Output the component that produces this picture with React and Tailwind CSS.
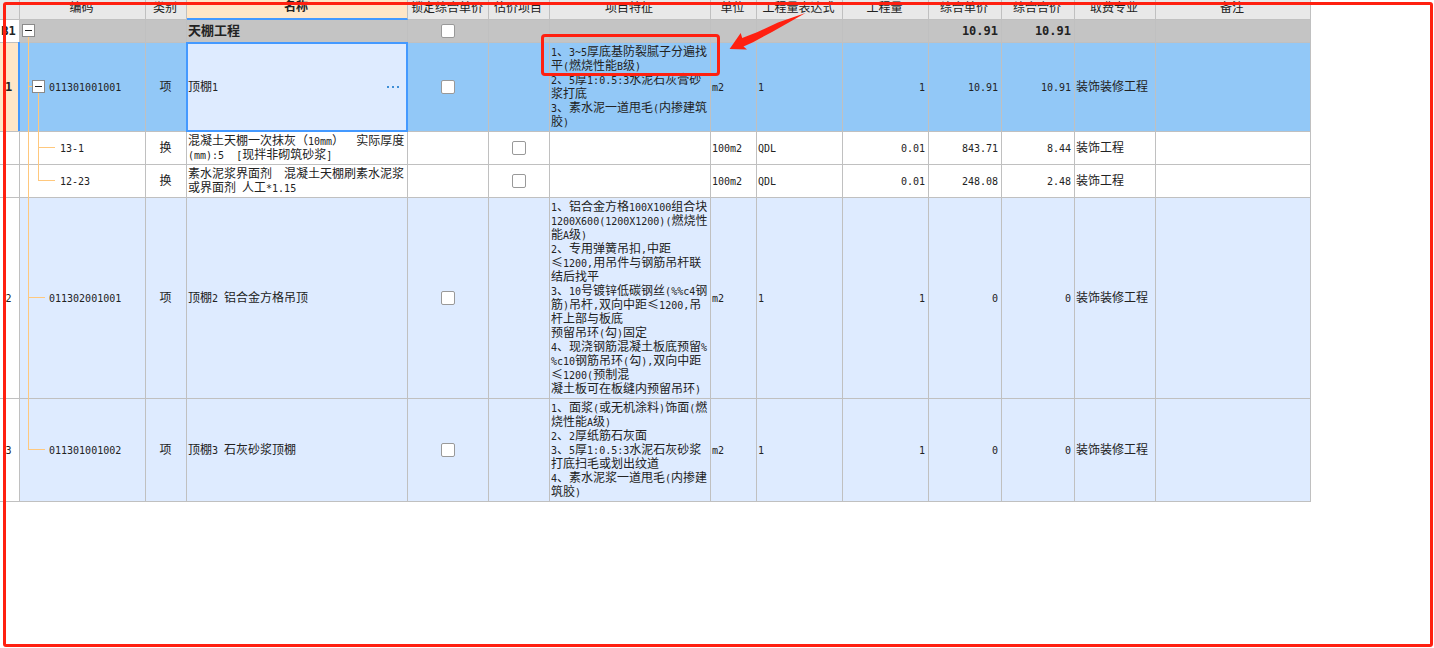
import React from "react";

const GRID = "border-[#c0c0c0]";

const columns = [
  { title: "", width: "w-5" },
  { title: "编码", width: "w-[126px]" },
  { title: "类别", width: "w-[41px]" },
  { title: "名称", width: "w-[221px]", active: true },
  { title: "锁定综合单价", width: "w-[81px]" },
  { title: "估价项目", width: "w-[61px]" },
  { title: "项目特征", width: "w-[161px]" },
  { title: "单位", width: "w-[46px]" },
  { title: "工程量表达式", width: "w-[86px]" },
  { title: "工程量", width: "w-[86px]" },
  { title: "综合单价", width: "w-[73px]" },
  { title: "综合合价", width: "w-[73px]" },
  { title: "取费专业", width: "w-[81px]" },
  { title: "备注", width: "w-[155px]" },
];

const rows = [
  {
    kind: "group",
    no: "B1",
    name: ["天棚工程"],
    lock: true,
    price: "10.91",
    total: "10.91",
  },
  {
    kind: "selected",
    no: "1",
    code: "011301001001",
    type: "项",
    name: ["顶棚1"],
    lock: true,
    feature: [
      "1、3~5厚底基防裂腻子分遍找",
      "平(燃烧性能B级)",
      "2、5厚1:0.5:3水泥石灰膏砂",
      "浆打底",
      "3、素水泥一道甩毛(内掺建筑",
      "胶)",
    ],
    unit: "m2",
    expr: "1",
    qty: "1",
    price: "10.91",
    total: "10.91",
    major: "装饰装修工程",
  },
  {
    kind: "child",
    code: "13-1",
    type: "换",
    name: ["混凝土天棚一次抹灰（10mm）  实际厚度", "(mm):5  [现拌非砌筑砂浆]"],
    estimate: true,
    unit: "100m2",
    expr: "QDL",
    qty: "0.01",
    price: "843.71",
    total: "8.44",
    major: "装饰工程",
  },
  {
    kind: "child",
    last: true,
    code: "12-23",
    type: "换",
    name: ["素水泥浆界面剂  混凝土天棚刷素水泥浆", "或界面剂 人工*1.15"],
    estimate: true,
    unit: "100m2",
    expr: "QDL",
    qty: "0.01",
    price: "248.08",
    total: "2.48",
    major: "装饰工程",
  },
  {
    kind: "item",
    no: "2",
    code: "011302001001",
    type: "项",
    name: ["顶棚2 铝合金方格吊顶"],
    lock: true,
    feature: [
      "1、铝合金方格100X100组合块",
      "1200X600(1200X1200)(燃烧性",
      "能A级)",
      "2、专用弹簧吊扣,中距",
      "≤1200,用吊件与钢筋吊杆联",
      "结后找平",
      "3、10号镀锌低碳钢丝(%%c4钢",
      "筋)吊杆,双向中距≤1200,吊",
      "杆上部与板底",
      "预留吊环(勾)固定",
      "4、现浇钢筋混凝土板底预留%",
      "%c10钢筋吊环(勾),双向中距",
      "≤1200(预制混",
      "凝土板可在板缝内预留吊环)",
    ],
    unit: "m2",
    expr: "1",
    qty: "1",
    price: "0",
    total: "0",
    major: "装饰装修工程",
  },
  {
    kind: "item",
    last: true,
    no: "3",
    code: "011301001002",
    type: "项",
    name: ["顶棚3 石灰砂浆顶棚"],
    lock: true,
    feature: [
      "1、面浆(或无机涂料)饰面(燃",
      "烧性能A级)",
      "2、2厚纸筋石灰面",
      "3、5厚1:0.5:3水泥石灰砂浆",
      "打底扫毛或划出纹道",
      "4、素水泥浆一道甩毛(内掺建",
      "筑胶)",
    ],
    unit: "m2",
    expr: "1",
    qty: "1",
    price: "0",
    total: "0",
    major: "装饰装修工程",
  },
];

const rowBackground = {
  group: "bg-[#c4c4c4]",
  selected: "bg-[#92c8f7]",
  child: "bg-white",
  item: "bg-[#deebff]",
};

// Latin runs are set in a half-width monospace beside full-width Chinese.
function Mixed({ text, bold }) {
  const runs = text.match(/[\x20-\x7e]+|[^\x20-\x7e]+/g) || [];
  return runs.map((run, i) =>
    /^[\x20-\x7e]/.test(run) ? (
      <span
        key={i}
        className={
          bold
            ? "font-['DejaVu_Sans_Mono',monospace] text-[12px] leading-none"
            : "font-['DejaVu_Sans_Mono',monospace] text-[10px] leading-none"
        }
      >
        {run}
      </span>
    ) : (
      <React.Fragment key={i}>{run}</React.Fragment>
    )
  );
}

function Lines({ lines, bold }) {
  return lines.map((line, i) => (
    <div key={i}>
      <Mixed text={line} bold={bold} />
    </div>
  ));
}

function Cell({ className = "", pad = "pt-px pb-[3px] pl-px", children }) {
  return (
    <td className={`border-r border-b ${GRID} ${pad} align-middle ${className}`}>
      {children}
    </td>
  );
}

function Check({ label }) {
  return (
    <input
      type="checkbox"
      aria-label={label}
      className="mx-auto block size-3.5 appearance-none rounded-[2px] border border-[#999] bg-white checked:bg-[#4499ff]"
    />
  );
}

function Toggle({ className }) {
  return (
    <button
      type="button"
      aria-label="折叠"
      className={`absolute top-[calc(50%-7px)] flex size-[13px] items-center justify-center border border-[#8a8a8a] bg-white ${className}`}
    >
      <span className="h-px w-[7px] bg-[#222]" />
    </button>
  );
}

function Tree({ row }) {
  const line = "absolute bg-[#ffc87d]";
  const branch = `${line} top-[calc(50%-1px)] h-px`;
  if (row.kind === "group") {
    return (
      <>
        <span className={`${line} left-2 top-1/2 -bottom-px w-px`} />
        <Toggle className="left-0.5" />
      </>
    );
  }
  if (row.kind === "selected") {
    return (
      <>
        <span className={`${line} left-2 top-0 -bottom-px w-px`} />
        <span className={`${branch} left-2 w-1`} />
        <span className={`${line} left-[18px] top-1/2 -bottom-px w-px`} />
        <Toggle className="left-3" />
      </>
    );
  }
  if (row.kind === "child") {
    return (
      <>
        <span className={`${line} left-2 top-0 -bottom-px w-px`} />
        <span className={`${line} left-[18px] top-0 w-px ${row.last ? "bottom-1/2" : "-bottom-px"}`} />
        <span className={`${branch} left-[18px] w-[17px]`} />
      </>
    );
  }
  return (
    <>
      <span className={`${line} left-2 top-0 w-px ${row.last ? "bottom-1/2" : "-bottom-px"}`} />
      <span className={`${branch} left-2 w-[17px]`} />
    </>
  );
}

function Callout() {
  return (
    <>
      <div className="pointer-events-none absolute -left-[9px] -top-[9px] z-10 h-[42px] w-[179px] rounded-[4px] border-3 border-[#ff2010]" />
      <svg
        className="pointer-events-none absolute left-[178px] -top-[33px] z-10"
        width="80"
        height="44"
        viewBox="728 10 80 44"
        aria-hidden="true"
      >
        <path
          d="M805.5 13 L772 32 L753 42.2 L743.5 46.5 L747 49.6 L729.6 48.9 L740.7 33 L742.2 38 L757 32.2 L778 22.6 Z"
          fill="#ff2010"
        />
      </svg>
    </>
  );
}

function Row({ row }) {
  const group = row.kind === "group";
  const selected = row.kind === "selected";
  const num = "pr-[3px] text-right";
  const checkPad = "py-0.5 pr-px";
  return (
    <tr className={`${rowBackground[row.kind]} ${group ? "h-[23px] text-[13px] font-bold" : ""}`}>
      <th
        scope="row"
        className={`relative border-r border-b ${GRID} pr-0.5 pb-0.5 text-center ${
          selected ? "bg-[#ffe6c7] font-bold" : group ? "bg-white font-bold" : "bg-white font-normal"
        }`}
      >
        {row.no && <Mixed text={row.no} bold={group || selected} />}
        {selected && <span className="absolute -top-px -right-px bottom-0 w-0.5 bg-[#4499ff]" />}
      </th>
      <Cell
        pad={row.kind === "child" ? "pt-px pb-[3px] pl-10" : "pt-px pb-[3px] pl-[29px]"}
        className="relative"
      >
        <Tree row={row} />
        {row.code && <Mixed text={row.code} />}
      </Cell>
      <Cell pad="pt-px pb-[3px] pr-px" className="text-center">
        {row.type}
      </Cell>
      <Cell className={selected ? "relative bg-[#deebff]" : ""}>
        <Lines lines={row.name} bold={group} />
        {selected && (
          <>
            <span className="pointer-events-none absolute -inset-px border-2 border-[#4499ff]" />
            <button
              type="button"
              aria-label="更多"
              className="absolute right-2 top-1/2 flex h-3 -translate-y-1/2 items-center gap-[3px]"
            >
              <span className="size-0.5 bg-[#3f8fd6]" />
              <span className="size-0.5 bg-[#3f8fd6]" />
              <span className="size-0.5 bg-[#3f8fd6]" />
            </button>
          </>
        )}
      </Cell>
      <Cell pad={checkPad}>{row.lock && <Check label="锁定综合单价" />}</Cell>
      <Cell pad={checkPad}>{row.estimate && <Check label="估价项目" />}</Cell>
      <Cell className="relative">
        {row.feature && <Lines lines={row.feature} />}
        {selected && <Callout />}
      </Cell>
      <Cell>{row.unit && <Mixed text={row.unit} />}</Cell>
      <Cell>{row.expr && <Mixed text={row.expr} />}</Cell>
      <Cell className={num}>{row.qty && <Mixed text={row.qty} />}</Cell>
      <Cell className={num}>{row.price && <Mixed text={row.price} bold={group} />}</Cell>
      <Cell className={num}>{row.total && <Mixed text={row.total} bold={group} />}</Cell>
      <Cell>{row.major}</Cell>
      <Cell />
    </tr>
  );
}

export default function App() {
  return (
    <main className="relative min-h-screen overflow-hidden bg-white font-['Noto_Sans_CJK_SC',sans-serif] text-[12px] leading-[14px] text-[#222]">
      <table className="w-[1311px] table-fixed border-separate border-spacing-0 whitespace-pre">
        <thead>
          <tr className="h-5">
            {columns.map((c, i) => (
              <th
                key={i}
                scope="col"
                className={`${c.width} h-5 border-r ${GRID} p-0 pr-0.5 pb-1.5 text-center leading-3 ${
                  c.active
                    ? "border-b-2 border-b-[#4499ff] bg-[#ffe6c7] font-bold"
                    : "border-b bg-[#e8e8e8] font-normal"
                }`}
              >
                {c.title}
              </th>
            ))}
          </tr>
        </thead>
        <tbody>
          {rows.map((row, i) => (
            <Row key={i} row={row} />
          ))}
        </tbody>
      </table>
      <div className="pointer-events-none absolute bottom-px left-[3px] right-px top-0.5 z-20 rounded-[3px] border-3 border-[#ff2010]" />
    </main>
  );
}
